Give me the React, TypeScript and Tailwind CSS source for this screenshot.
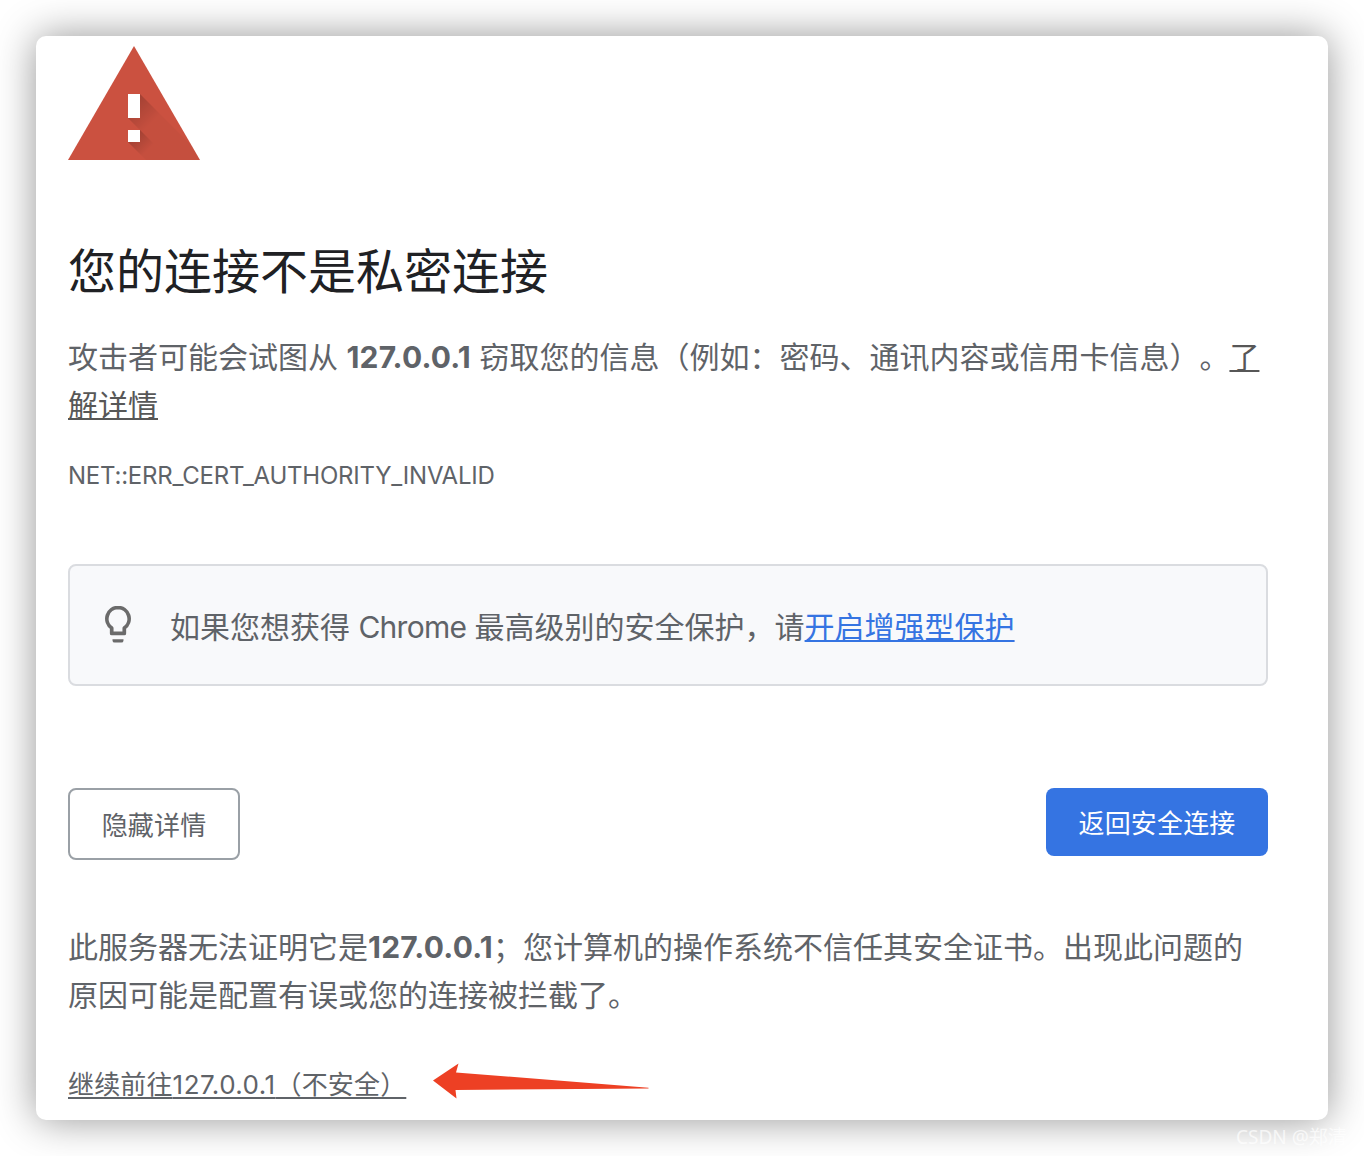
const HOST = '127.0.0.1'

function WarningIcon() {
  return (
    <svg className="block h-[114px] w-[132px]" viewBox="0 0 132 114">
      <defs>
        <linearGradient id="mark-shade" gradientUnits="userSpaceOnUse" x1="66" y1="54" x2="86" y2="74">
          <stop offset="0" stopColor="#000" stopOpacity="0.2" />
          <stop offset="1" stopColor="#000" stopOpacity="0.03" />
        </linearGradient>
        <linearGradient id="dot-shade" gradientUnits="userSpaceOnUse" x1="66" y1="90" x2="80" y2="104">
          <stop offset="0" stopColor="#000" stopOpacity="0.18" />
          <stop offset="1" stopColor="#000" stopOpacity="0" />
        </linearGradient>
      </defs>
      <path d="M66 0L132 114H0Z" fill="#cb5140" />
      <path d="M72 48L124 100L132 114H78L60 96L72 84L60 72H72Z" fill="url(#mark-shade)" />
      <path d="M72 84L102 114H78L60 96Z" fill="url(#dot-shade)" />
      <path d="M60 48h12v24H60zM60 84h12v12H60z" fill="#fff" />
    </svg>
  )
}

function BulbIcon() {
  return (
    <svg className="block h-[38px] w-[26px] shrink-0" viewBox="0 0 26 38" fill="none">
      <path
        d="M13 1.500a11.200 11.200 0 0 0-6.300 20.400V27.400h12.600V21.900A11.200 11.200 0 0 0 13 1.500z"
        stroke="#6b6b6b"
        strokeWidth="3.700"
        strokeLinejoin="round"
      />
      <path d="M7.500 33.200h11v1.200a2.200 2.200 0 0 1-2.200 2.200H9.700a2.200 2.200 0 0 1-2.200-2.200z" fill="#6b6b6b" />
    </svg>
  )
}

function Arrow() {
  return (
    <svg className="ml-[27px] block h-9 w-[216px]" viewBox="0 0 216 36">
      <path d="M0 17.500L25.500.5L23 9.500L215.500 24.700L215.500 25.500L22.500 27L23.500 35.500Z" fill="#ed4024" />
    </svg>
  )
}

export default function App() {
  return (
    <div className="relative h-[1156px] w-[1364px] overflow-hidden bg-white p-9 font-[Inter,'Noto_Sans_CJK_SC',sans-serif] text-[#5f6368] [text-spacing-trim:space-all]">
      <main className="h-[1084px] rounded-[10px] bg-white px-8 pt-[10px] shadow-[0_0_40px_rgba(0,0,0,0.42)]">
        <div className="w-[1200px]">
          <WarningIcon />

          <h1 className="mt-[83px] text-[48px] leading-[58px] text-[#202124]">您的连接不是私密连接</h1>

          <p className="mt-[32px] text-[30px] leading-[48px]">
            攻击者可能会试图从 <strong className="font-bold tracking-[0.2px]">{HOST}</strong> 窃取您的信息（例如：密码、通讯内容或信用卡信息）。
            <a className="text-[#575757] underline decoration-2 underline-offset-2">了解详情</a>
          </p>

          <div className="mt-[31px] text-[24px] leading-[32px] tracking-[-0.23px]">NET::ERR_CERT_AUTHORITY_INVALID</div>

          <div className="mt-[72px] flex h-[122px] items-center rounded-lg border-2 border-[#dadce0] bg-[#f8f9fb] pl-[35px]">
            <BulbIcon />
            <p className="ml-[39px] pt-1 text-[30px] leading-[48px]">
              如果您想获得 <span className="tracking-[-0.75px]">Chrome</span> 最高级别的安全保护，请
              <a className="text-[#3574e2] underline decoration-2 underline-offset-2">开启增强型保护</a>
            </p>
          </div>

          <div className="mt-[102px] flex items-start justify-between">
            <button className="h-[72px] w-[172px] rounded-lg border-2 border-[#9aa0a6] pt-0.5 text-[26px] tracking-[0.15px]">
              隐藏详情
            </button>
            <button className="h-[68px] w-[222px] rounded-lg bg-[#3574e2] pt-0.5 text-[26px] tracking-[0.15px] text-white">
              返回安全连接
            </button>
          </div>

          <p className="mt-[63px] text-[30px] leading-[48px]">
            此服务器无法证明它是<strong className="font-bold tracking-[0.25px]">{HOST}</strong>；您计算机的操作系统不信任其安全证书。出现此问题的原因可能是配置有误或您的连接被拦截了。
          </p>

          <div className="mt-[44px] flex items-start">
            <a className="mt-[4px] text-[26px] leading-[36px] tracking-[0.15px] underline decoration-2 underline-offset-3">
              继续前往<span className="tracking-[0.45px]">{HOST}</span>（不安全）
            </a>
            <Arrow />
          </div>
        </div>
      </main>

      <div className="absolute left-[1236px] top-[1124px] whitespace-nowrap font-['Noto_Sans','Noto_Sans_CJK_SC',sans-serif] text-[19px] leading-[26px] text-white/70">
        CSDN @郑清
      </div>
    </div>
  )
}
